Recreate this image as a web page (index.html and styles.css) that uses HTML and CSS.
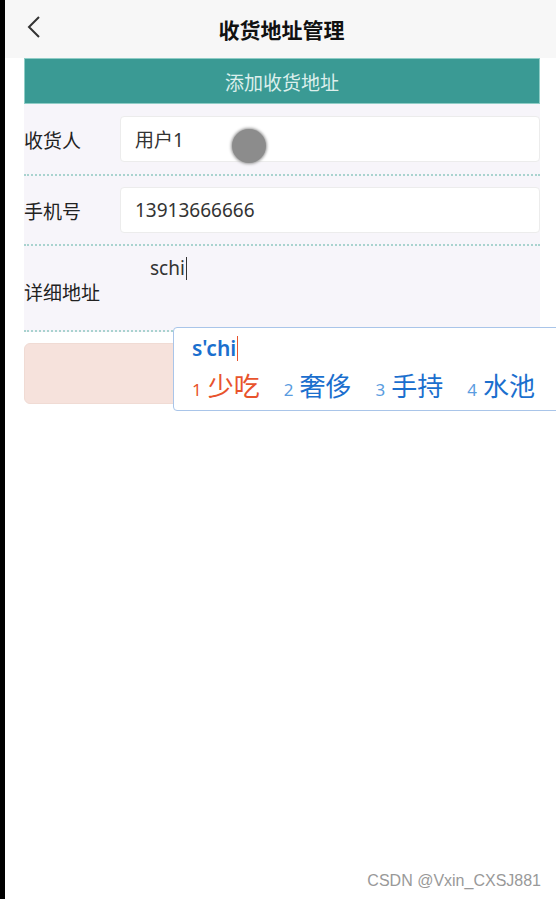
FILE: index.html
```html
<!DOCTYPE html>
<html lang="zh-CN">
<head>
    <meta charset="UTF-8">
    <meta name="viewport" content="width=device-width, initial-scale=1.0">
    <title>收货地址管理</title>
    <link rel="stylesheet" href="styles.css">
</head>
<body>
    <div class="screen">
        <header class="topbar">
            <span class="back">
                <svg width="16" height="24" viewBox="0 0 16 24"><polyline points="13,2 3,12 13,22" fill="none" stroke="#333" stroke-width="2"/></svg>
            </span>
            <h1 class="title">收货地址管理</h1>
        </header>

        <main class="content">
            <button class="add-btn">添加收货地址</button>

            <form class="address-form">
                <div class="form-row name-row">
                    <label class="label">收货人</label>
                    <div class="field">用户1</div>
                </div>
                <div class="form-row">
                    <label class="label">手机号</label>
                    <div class="field">13913666666</div>
                </div>
                <div class="form-row area-row">
                    <label class="label">详细地址</label>
                    <div class="area">schi<span class="caret"></span></div>
                </div>
            </form>

            <button class="save-btn"></button>
        </main>

        <div class="touch-dot"></div>

        <div class="ime">
            <div class="ime-input">s'chi<span class="ime-caret"></span></div>
            <div class="ime-list">
                <span class="cand active"><i>1</i>少吃</span>
                <span class="cand"><i>2</i>奢侈</span>
                <span class="cand"><i>3</i>手持</span>
                <span class="cand"><i>4</i>水池</span>
            </div>
        </div>

        <div class="watermark">CSDN @Vxin_CXSJ881</div>
    </div>
</body>
</html>
```

FILE: styles.css
```css
body {
    margin: 0;
    font-family: "Noto Sans", "Noto Sans CJK SC", sans-serif;
    background-color: #fff;
}

.screen {
    position: relative;
    height: 899px;
    border-left: 5px solid #000;
    overflow: hidden;
    background-color: #fff;
}

.topbar {
    height: 58px;
    background-color: #f7f7f7;
    display: flex;
    align-items: center;
    justify-content: center;
    position: relative;
}

.back {
    position: absolute;
    left: 21px;
    top: 15px;
    display: flex;
}

.title {
    margin: 0 0 0 2px;
    font-family: "Noto Sans CJK SC", sans-serif;
    font-size: 21px;
    font-weight: 700;
    color: #111;
}

.content {
    padding: 0 16px 0 19px;
}

.add-btn {
    display: block;
    width: 100%;
    height: 46px;
    border: 1px solid #8fcdc6;
    background-color: #3a9a94;
    color: #dcefec;
    font-family: "Noto Sans CJK SC", sans-serif;
    font-size: 19px;
    padding: 0;
}

.address-form {
    background-color: #f7f5fa;
}

.form-row {
    display: flex;
    align-items: center;
    height: 68px;
    border-bottom: 2px dotted #a9d3cf;
}

.name-row {
    height: 70px;
}

.label {
    width: 96px;
    flex-shrink: 0;
    font-family: "Noto Sans CJK SC", sans-serif;
    font-size: 19px;
    color: #222;
}

.field {
    flex: 1;
    height: 46px;
    box-sizing: border-box;
    background-color: #fff;
    border: 1px solid #ececec;
    border-radius: 4px;
    padding-left: 14px;
    display: flex;
    align-items: center;
    font-size: 19px;
    color: #333;
}

.area-row {
    height: 84px;
    align-items: flex-start;
}

.area-row .label {
    margin-top: 32px;
    width: 126px;
}

.area {
    margin-top: 9px;
    font-size: 19px;
    color: #333;
    display: flex;
    align-items: center;
}

.caret {
    display: inline-block;
    width: 1px;
    height: 23px;
    background-color: #333;
    margin-left: 1px;
}

.save-btn {
    display: block;
    width: 100%;
    height: 61px;
    margin-top: 11px;
    border: 1px solid #f0dbd4;
    border-radius: 6px;
    background-color: #f6e2dc;
    padding: 0;
}

.touch-dot {
    position: absolute;
    left: 227px;
    top: 129px;
    width: 34px;
    height: 34px;
    border-radius: 50%;
    background-color: #8c8c8c;
    box-shadow: 0 0 3px 1px #999;
}

.ime {
    position: absolute;
    left: 168px;
    top: 327px;
    width: 400px;
    height: 84px;
    box-sizing: border-box;
    background-color: #fff;
    border: 1px solid #a9c5e9;
    border-radius: 4px;
    padding: 4px 0 0 18px;
}

.ime-input {
    font-size: 21px;
    font-weight: 600;
    color: #1b6fce;
    display: flex;
    align-items: center;
    height: 32px;
}

.ime-caret {
    display: inline-block;
    width: 1px;
    height: 25px;
    background-color: #e8532c;
    margin-left: 1px;
}

.ime-list {
    display: flex;
    gap: 24px;
    margin-top: 6px;
    font-family: "Noto Sans CJK SC", sans-serif;
    font-size: 26px;
    color: #1b6fce;
    line-height: 30px;
}

.cand i {
    font-style: normal;
    font-family: "Noto Sans", sans-serif;
    font-size: 17px;
    color: #5a9ce0;
    margin-right: 6px;
}

.cand.active,
.cand.active i {
    color: #e8532c;
}

.watermark {
    position: absolute;
    right: 15px;
    bottom: 9px;
    font-family: "Liberation Sans", sans-serif;
    font-size: 16px;
    color: #999;
}
```
